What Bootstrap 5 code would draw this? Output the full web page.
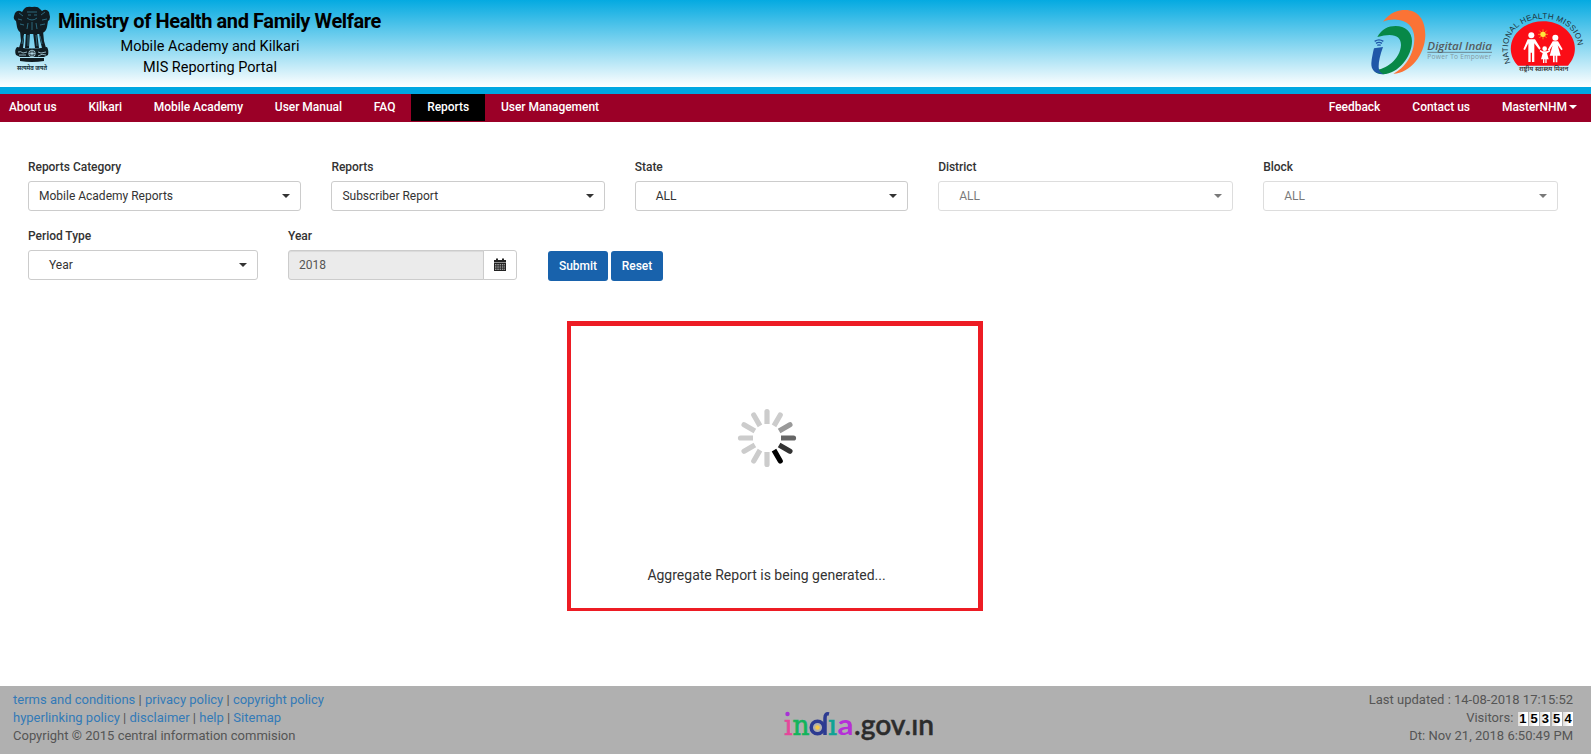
<!DOCTYPE html>
<html lang="en">
<head>
<meta charset="utf-8">
<title>MIS Reporting Portal</title>
<link href="https://cdn.jsdelivr.net/npm/bootstrap@5.3.0/dist/css/bootstrap.min.css" rel="stylesheet">
<style>
body{font-family:Roboto,"Liberation Sans",sans-serif;font-size:14px;color:#333;height:754px;overflow:hidden;line-height:18px}
.masthead{height:94px;background:linear-gradient(#04aae1,#fff);background-size:100% 87px;background-repeat:no-repeat;border-bottom:7px solid #00a7e1}
.brand-text{margin-left:0;padding-top:9px;color:#000}
.brand-text h1{font-size:20px;font-weight:700;letter-spacing:-.4px;line-height:25px;margin:0;white-space:nowrap}
.brand-text p{font-size:14.5px;line-height:20px;margin:0;width:304px;text-align:center;white-space:nowrap}
.brand-text p:nth-child(2){margin-top:3px}
.brand-text p:nth-child(3){margin-top:1px}
.main-nav{height:28px;background:#9b0027;margin:0;padding:0}
.main-nav .nav-left{margin-left:-7px}
.main-nav .nav-right{margin-right:-2px}
.main-nav .nav-link{color:#fff;font-size:12px;font-weight:500;letter-spacing:-.03px;line-height:26px;height:27px;padding:0 15.880px;white-space:nowrap}
.main-nav .nav-right .nav-link{padding:0 16px}
.main-nav .nav-link.active{background:#000}
.main-nav .dropdown-toggle::after{border-top:4px solid;border-right:4px solid transparent;border-left:4px solid transparent;margin-left:2px;vertical-align:2px}
.filters{padding:36px 13px 0}
.field{padding:0 15px;height:69px}
.field label{display:block;font-size:12px;font-weight:500;letter-spacing:-.04px;line-height:19px;margin-bottom:4px}
.picker{height:30px;border:1px solid #ccc;border-radius:3px;font-size:12px;background:#fff;padding:0 10px}
.picker::after{content:"";border-top:4px solid #333;border-left:4px solid transparent;border-right:4px solid transparent}
.picker.indent{padding-left:20px}
.picker.off{opacity:.65}
.w-a{width:303.4px}.w-b{width:325px}.w-c{width:260px}
.input-group{height:30px;width:229px}
.input-group .form-control{font-size:12px;background:#ebebeb;color:#555;border-color:#ccc;padding:0 10px;border-radius:3px 0 0 3px;box-shadow:inset 0 1px 1px rgba(0,0,0,.075)}
.input-group-text{width:34px;background:#fff;border-color:#ccc;padding:0 0 2px 10px;border-radius:0 3px 3px 0}
.btn-portal,.btn-portal:hover{background:#1862ac;color:#fff;font-size:12px;font-weight:500;height:30px;padding:0;border-radius:3px;border:0}
.actions{padding:24px 0 0 15px;gap:3px}
.loader{width:416px;height:290px;margin:25px 0 0 567px;border:solid #ed1c24;border-width:5px 5px 3px 4px;padding:82px 16px 0 0}
.loader p{margin:98px 0 0}
footer{height:68px;background:#b0b0b0;margin-top:75px;padding:5px 18px 0 13px;font-size:13px;color:#555;white-space:nowrap}
footer a{color:#337ab7;text-decoration:none}
.foot-side{flex:0 0 400px}
.foot-count{height:18px}
.gov-mark{margin:9px 0 0 370px}
.digit{display:inline-block;width:10px;height:14px;margin-left:1.3px;background:linear-gradient(90deg,#ddd,#fff 60%);color:#000;font:bold 13px/14px "Liberation Sans",sans-serif;text-align:center;vertical-align:-1px}
</style>
</head>
<body>
<header class="masthead d-flex justify-content-between">
<div class="d-flex">
<svg width="58" height="80" viewBox="0 0 58 80" aria-label="State emblem">
<g fill="#101c22">
<path d="M24 9q2-3 8-2q6-1 8 2l2 2q4-3 7 1l1 5q0 3-2 4l-1 6q-1 5-5 6l-2 1H24l-2-1q-4-1-5-6l-1-6q-3-2-2-5l1-3q3-4 7-1z"/>
<path d="M20 31l4 1v8l-1 8h-4l2-7zM26 32h4l-1 16h-4zM33 32h4l2 16h-4zM39 32l4-1 1 10 2 7h-4l-2-8z"/>
<path d="M17 47q15 3 30 0q2 3 1 8l-4 2H20l-4-2q-2-5 1-8zM20 58h24v3q-12 2-24 0z"/>
</g>
<g fill="none" stroke="#3c9ab9" stroke-width=".6">
<path d="M27 12h10M28 15h3m3 0h3M27 18q5 4 10 0M19 13l4 3m-5 3l4 1m-2 4l4 1M45 12l-4 3m6 4l-5 1m3 4l-5 1M28 23l-1 6m5-7v8m4-7l1 6M22 44l2-9m4 11v-11m8 0l1 11m5-2l-2-8"/>
</g>
<g fill="none" stroke="#b5dbe8" stroke-width=".8"><circle cx="32" cy="53.500" r="3.300"/><path d="M29 53.500h6M32 50.500v6M30 51.500l4 4m0-4l-4 4M18 52q3-1 5 1l4-1m-8 3h7M38 52l3 1 5-1m-8 4q4-3 8-1"/></g>
<text x="17" y="69.500" font-family="'Noto Sans',sans-serif" font-size="6.500" font-weight="700" fill="#15333d" textLength="30" lengthAdjust="spacingAndGlyphs">सत्यमेव जयते</text>
</svg>
<div class="brand-text"><h1>Ministry of Health and Family Welfare</h1><p>Mobile Academy and Kilkari</p><p>MIS Reporting Portal</p></div>
</div>
<div class="d-flex pt-1">
<svg width="130" height="76" viewBox="0 -3 390 228" aria-label="Digital India">
<path fill="#fb7335" d="M54 50C75 22 100 15 120 15C160 15 181 45 181 90C180 150 135 205 85 206C118 190 148 150 148 100C148 65 125 45 95 44C80 43 65 45 54 50Z"/>
<path fill="#078847" d="M37 96C50 72 70 63 92 63C120 63 141 80 141 108C141 155 100 206 55 208C40 208 30 203 26 195C62 196 106 162 108 120C108 92 84 82 37 96Z"/>
<path fill="#1f57a8" d="M27 130L54 126C45 150 41 170 41 184C41 197 46 204 57 208C30 207 18 195 19 175C20 160 24 142 27 130Z"/>
<path fill="none" stroke="#1f57a8" stroke-width="4" d="M29 109q13-9 26 0M33 115q9-6 18 0M37 121q5-3 10 0"/>
<text x="187" y="135" font-family="'Open Sans',sans-serif" font-size="32" font-weight="600" font-style="italic" fill="#555c60" textLength="194" lengthAdjust="spacingAndGlyphs">Digital India</text>
<path stroke="#555c60" stroke-width="2" d="M187 142h194"/>
<text x="187" y="163" font-family="'Open Sans',sans-serif" font-size="20" fill="#8499a2" textLength="192">Power To Empower</text>
</svg>
<svg width="96" height="76" viewBox="0 -3 288 228" aria-label="National Health Mission">
<path id="nhmArc" fill="none" d="M47 174C16 90 78 41 144 41C212 41 270 90 241 174"/>
<text font-family="'Liberation Sans',sans-serif" font-size="24" fill="#20343c"><textPath href="#nhmArc" textLength="344">NATIONAL HEALTH MISSION</textPath></text>
<path fill="#fb0d16" d="M69 182C34 146 45 97 77 72C113 41 176 41 211 72C244 99 251 147 219 182Z"/>
<path stroke="#f9a51a" stroke-width="2.500" d="M144 73v30M129 88h30M133 77l22 22M155 77l-22 22"/>
<circle cx="144" cy="88" r="8" fill="#ffe63b"/>
<g fill="#fff">
<circle cx="109" cy="91" r="9"/><path d="M98 103h22l17 27-4 4-15-19v56h-7v-28h-4v28h-7v-56l-10 20-5-2z"/>
<circle cx="181" cy="98" r="9"/><path d="M173 109h16l14 24-4 3-11-15 9 31h-10v20h-5v-20h-3v20h-5v-20h-10l9-31-10 16-5-3z"/>
<circle cx="149" cy="131" r="7"/><path d="M143 139h12l10-4 1 4-10 6 5 18h-6v11h-4v-11h-3v11h-4v-11h-6l5-18-9-6 2-4z"/>
</g>
<text x="72" y="198" font-family="'Noto Sans',sans-serif" font-size="17" font-weight="600" fill="#30312f" textLength="148" lengthAdjust="spacingAndGlyphs">राष्ट्रीय स्वास्थ्य मिशन</text>
</svg>
</div>
</header>
<nav class="main-nav d-flex justify-content-between">
<div class="nav nav-left flex-nowrap"><a class="nav-link" href="#">About us</a><a class="nav-link" href="#">Kilkari</a><a class="nav-link" href="#">Mobile Academy</a><a class="nav-link" href="#">User Manual</a><a class="nav-link" href="#">FAQ</a><a class="nav-link active" href="#">Reports</a><a class="nav-link" href="#">User Management</a></div>
<div class="nav nav-right flex-nowrap"><a class="nav-link" href="#">Feedback</a><a class="nav-link" href="#">Contact us</a><a class="nav-link dropdown-toggle" href="#">MasterNHM</a></div>
</nav>
<main>
<form class="filters">
<div class="d-flex">
<div class="field w-a"><label>Reports Category</label><div class="picker d-flex align-items-center justify-content-between">Mobile Academy Reports</div></div>
<div class="field w-a"><label>Reports</label><div class="picker d-flex align-items-center justify-content-between">Subscriber Report</div></div>
<div class="field w-a"><label>State</label><div class="picker indent d-flex align-items-center justify-content-between">ALL</div></div>
<div class="field w-b"><label>District</label><div class="picker indent off d-flex align-items-center justify-content-between">ALL</div></div>
<div class="field w-b"><label>Block</label><div class="picker indent off d-flex align-items-center justify-content-between">ALL</div></div>
</div>
<div class="d-flex">
<div class="field w-c"><label>Period Type</label><div class="picker indent d-flex align-items-center justify-content-between">Year</div></div>
<div class="field w-c"><label>Year</label><div class="input-group flex-nowrap"><input class="form-control" value="2018" readonly><span class="input-group-text"><svg width="12" height="13" viewBox="0 0 12 13"><path fill="#222" d="M0 2h2V.500h2V2h4V.500h2V2h2v2.500H0zM0 5h12v8H0z"/><path stroke="#fff" stroke-width=".8" stroke-dasharray="1.500 .8" d="M1 6.800h10M1 9h10M1 11.200h10"/></svg></span></div></div>
<div class="actions d-flex align-items-start"><button type="button" class="btn btn-portal" style="width:60px">Submit</button><button type="button" class="btn btn-portal" style="width:52px">Reset</button></div>
</div>
</form>
<section class="loader text-center">
<svg class="d-block mx-auto" width="60" height="60" viewBox="-30 -30 60 60" fill="#ccc">
<defs><path id="ray" d="M-2.600-14V-26.500a2.600 2.600 0 0 1 5.200 0V-14z"/></defs>
<use href="#ray"/><use href="#ray" transform="rotate(30)"/><use href="#ray" transform="rotate(60)" fill="#999"/><use href="#ray" transform="rotate(90)" fill="#666"/><use href="#ray" transform="rotate(120)" fill="#333"/><use href="#ray" transform="rotate(150)" fill="#000"/><use href="#ray" transform="rotate(180)"/><use href="#ray" transform="rotate(210)"/><use href="#ray" transform="rotate(240)"/><use href="#ray" transform="rotate(270)"/><use href="#ray" transform="rotate(300)"/><use href="#ray" transform="rotate(330)"/>
</svg>
<p>Aggregate Report is being generated...</p>
</section>
</main>
<footer class="d-flex">
<div class="foot-side"><div><a href="#">terms and conditions</a> | <a href="#">privacy policy</a> | <a href="#">copyright policy</a></div><div><a href="#">hyperlinking policy</a> | <a href="#">disclaimer</a> | <a href="#">help</a> | <a href="#">Sitemap</a></div><div>Copyright © 2015 central information commision</div></div>
<svg width="160" height="50" viewBox="0 0 160 50" class="gov-mark" font-family="Lato,sans-serif" font-size="29" font-weight="600" aria-label="india.gov.in">
<g font-family="'DejaVu Serif',serif" font-size="28" font-weight="400" stroke-width=".7">
<text x="1" y="35" fill="#e5479b" stroke="#e5479b" textLength="8.500" lengthAdjust="spacingAndGlyphs">ı</text><circle cx="4.500" cy="14" r="2.200" fill="#a832d6"/>
<text x="9.500" y="35" fill="#12b45b" stroke="#12b45b" textLength="17" lengthAdjust="spacingAndGlyphs">n</text>
<text x="45" y="35" fill="#10a394" stroke="#10a394" textLength="9" lengthAdjust="spacingAndGlyphs">ı</text>
</g>
<circle cx="34.500" cy="27.500" r="6.300" fill="none" stroke="#2c3a91" stroke-width="3.500"/><path d="M46 14q-4-1-4 4v17" fill="none" stroke="#2c3a91" stroke-width="3.500"/><circle cx="34.500" cy="27.500" r="2.300" fill="#f6c646"/>
<text x="54.500" y="35" fill="#b52fd8" font-weight="700" textLength="16" lengthAdjust="spacingAndGlyphs">a</text>
<text x="71" y="35" fill="#2c2c2c" stroke="#2c2c2c" stroke-width=".4" textLength="80" lengthAdjust="spacingAndGlyphs">.gov.ın</text>
</svg>
<div class="foot-side text-end ms-auto"><div>Last updated : 14-08-2018 17:15:52</div><div class="foot-count">Visitors: <span class="digit">1</span><span class="digit">5</span><span class="digit">3</span><span class="digit">5</span><span class="digit">4</span></div><div>Dt: Nov 21, 2018 6:50:49 PM</div></div>
</footer>
<script src="https://cdn.jsdelivr.net/npm/bootstrap@5.3.0/dist/js/bootstrap.bundle.min.js"></script>
</body>
</html>
